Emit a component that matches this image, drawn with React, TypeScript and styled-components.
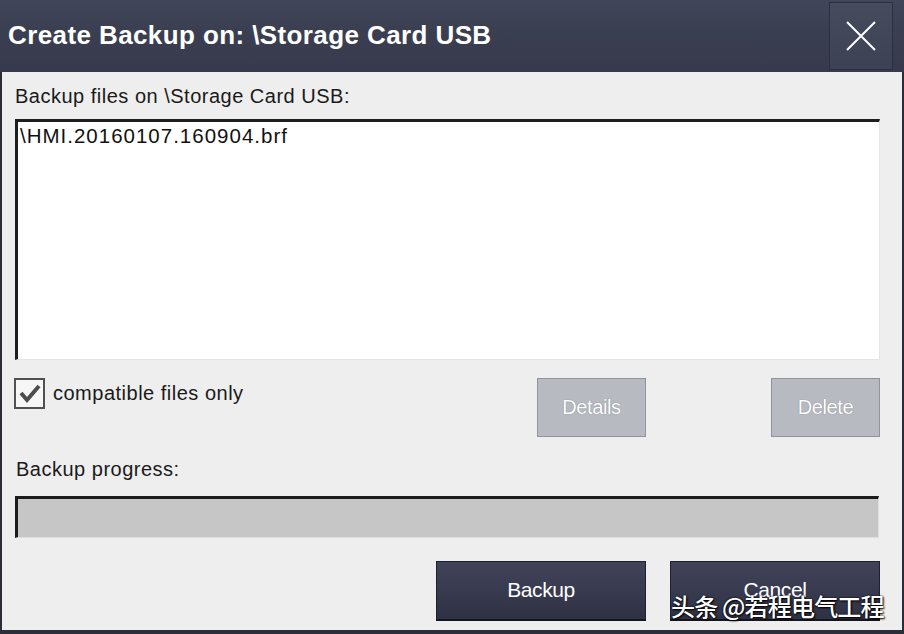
import React from "react";
import styled, { createGlobalStyle } from "styled-components";

const Global = createGlobalStyle`
  html, body { margin: 0; padding: 0; background: #2a2c38; }
  body { width: 904px; height: 634px; overflow: hidden; }
  * { box-sizing: border-box; }
`;

const Dialog = styled.div`
  position: relative;
  width: 904px;
  height: 634px;
  display: flex;
  flex-direction: column;
  background: #2b2d39;
  font-family: "Liberation Sans", Arial, sans-serif;
`;

const TitleBar = styled.div`
  height: 72px;
  display: flex;
  align-items: center;
  justify-content: space-between;
  padding: 0 10px 0 8px;
  background: linear-gradient(#42465a 0%, #3b3f52 40%, #373a4c 100%);
`;

const Title = styled.h1`
  margin: 0 0 2px 0;
  font-size: 26px;
  font-weight: bold;
  color: #ffffff;
  letter-spacing: 0.4px;
  white-space: nowrap;
`;

const CloseButton = styled.button`
  width: 64px;
  height: 68px;
  margin-right: 1px;
  border: 1px solid #2c2f3d;
  background: linear-gradient(#464b5e, #3c4154);
  display: flex;
  align-items: center;
  justify-content: center;
  padding: 0;
`;

const Body = styled.div`
  flex: 1;
  display: flex;
  flex-direction: column;
  margin: 0 2px 4px 2px;
  padding: 12px 22px 0 13px;
  background: #eeeeee;
`;

const Label = styled.div`
  font-size: 20px;
  color: #1a1a1a;
  line-height: 24px;
  height: 24px;
  letter-spacing: 0.5px;
`;

const ListBox = styled.div`
  margin-top: 11px;
  height: 241px;
  background: #ffffff;
  border-top: 3px solid #1e1e1e;
  border-left: 3px solid #1e1e1e;
  border-right: 1px solid #e4e4e4;
  border-bottom: 1px solid #e4e4e4;
  padding: 1px 0 0 2px;
`;

const ListItem = styled.div`
  font-size: 20.5px;
  line-height: 26px;
  color: #111111;
  letter-spacing: 1px;
`;

const OptionsRow = styled.div`
  display: flex;
  align-items: flex-start;
  margin-top: 18px;
  height: 59px;
`;

const CheckLabel = styled.label`
  display: flex;
  align-items: center;
  gap: 8px;
  font-size: 20px;
  letter-spacing: 0.5px;
  color: #1a1a1a;
  height: 31px;
  flex: 1;
  margin-left: -1px;
`;

const CheckBox = styled.span`
  width: 31px;
  height: 31px;
  border: 2px solid #505050;
  background: #f6f6f6;
  display: flex;
  align-items: center;
  justify-content: center;
`;

const GrayButton = styled.button<{ $ml: number }>`
  width: 109px;
  height: 59px;
  margin-left: ${(p) => p.$ml}px;
  background: #b7bac1;
  border: 1px solid #8f939b;
  color: #ffffff;
  font-family: "Liberation Sans", Arial, sans-serif;
  font-size: 20px;
  letter-spacing: -0.4px;
  text-shadow: 0 0 1px #6d717a;
  padding: 0;
`;

const ProgressLabel = styled(Label)`
  margin-top: 20px;
  margin-left: 1px;
`;

const ProgressBar = styled.div`
  margin-top: 15px;
  height: 42px;
  background: #c6c6c6;
  border-top: 3px solid #1b1b1b;
  border-left: 3px solid #1b1b1b;
  border-right: 1px solid #dedede;
  border-bottom: 1px solid #dedede;
  margin-right: 1px;
`;

const ActionRow = styled.div`
  display: flex;
  justify-content: flex-end;
  gap: 24px;
  margin-top: 23px;
  margin-right: 0;
`;

const DarkButton = styled.button`
  width: 210px;
  height: 60px;
  background: linear-gradient(#414459 0%, #383a4f 50%, #2f3144 100%);
  border: 1px solid #1f2030;
  border-bottom: 2px solid #15161f;
  color: #ffffff;
  font-family: "Liberation Sans", Arial, sans-serif;
  font-size: 21px;
  letter-spacing: -0.4px;
  padding: 0 0 2px 0;
`;

const Watermark = styled.div`
  position: absolute;
  left: 671px;
  top: 588px;
  font-family: "Noto Sans CJK SC", sans-serif;
  font-size: 24px;
  font-weight: 500;
  color: #ffffff;
  letter-spacing: -0.8px;
  text-shadow: 0 0 2px #000, 1px 1px 2px #000;
  white-space: nowrap;
`;

export default function App() {
  return (
    <Dialog>
      <Global />
      <TitleBar>
        <Title>Create Backup on: \Storage Card USB</Title>
        <CloseButton aria-label="Close">
          <svg width="34" height="34" viewBox="0 0 34 34">
            <path d="M3 3 L31 31 M31 3 L3 31" stroke="#ffffff" strokeWidth="2" fill="none" />
          </svg>
        </CloseButton>
      </TitleBar>
      <Body>
        <Label>Backup files on \Storage Card USB:</Label>
        <ListBox>
          <ListItem>\HMI.20160107.160904.brf</ListItem>
        </ListBox>
        <OptionsRow>
          <CheckLabel>
            <CheckBox>
              <svg width="22" height="20" viewBox="0 0 22 20">
                <path d="M2 9 L8 16 L20 2" stroke="#4d4d4d" strokeWidth="4" fill="none" strokeLinejoin="miter" />
              </svg>
            </CheckBox>
            compatible files only
          </CheckLabel>
          <GrayButton $ml={0}>Details</GrayButton>
          <GrayButton $ml={125}>Delete</GrayButton>
        </OptionsRow>
        <ProgressLabel>Backup progress:</ProgressLabel>
        <ProgressBar />
        <ActionRow>
          <DarkButton>Backup</DarkButton>
          <DarkButton>Cancel</DarkButton>
        </ActionRow>
      </Body>
      <Watermark>头条 @若程电气工程</Watermark>
    </Dialog>
  );
}
